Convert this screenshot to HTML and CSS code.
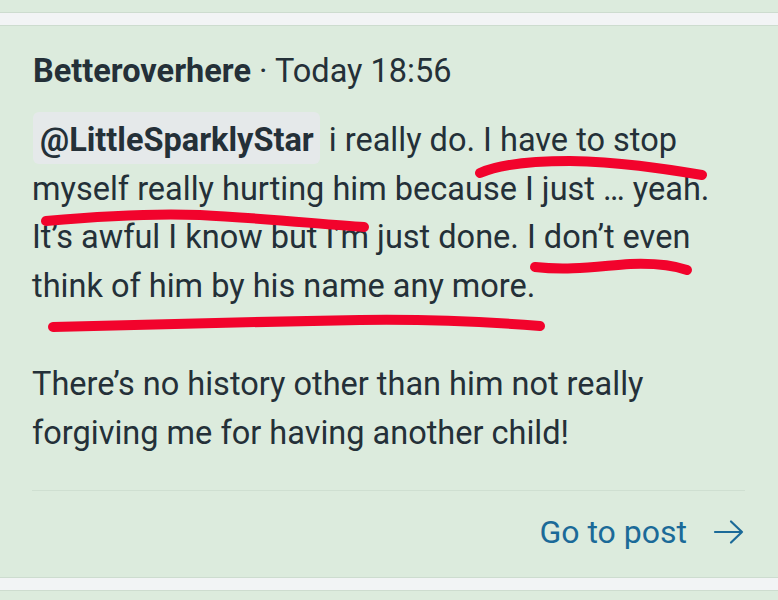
FILE: index.html
```html
<!DOCTYPE html>
<html lang="en">
<head>
<meta charset="utf-8">
<title>Post</title>
<link rel="stylesheet" href="styles.css">
</head>
<body>
<div class="page">
  <div class="spacer"></div>
  <div class="band"></div>
  <article class="card">
    <header class="meta"><span class="author">Betteroverhere</span> · Today 18:56</header>
    <div class="body">
      <p class="para"><span class="mention">@LittleSparklyStar</span> i really do. I have to stop myself really hurting him because I just … yeah. It’s awful I know but I’m just done. I don’t even think of him by his name any more.</p>
      <p class="para">There’s no history other than him not really forgiving me for having another child!</p>
    </div>
    <footer class="foot">
      <a class="go" href="#">Go to post
        <svg class="arrow" width="32" height="26" viewBox="0 0 32 26"><path d="M2 13H29M18 2.5L29 13L18 23.5" fill="none" stroke="currentColor" stroke-width="2.2" stroke-linecap="round" stroke-linejoin="round"/></svg>
      </a>
    </footer>
  </article>
  <div class="band"></div>
  <svg class="ink" viewBox="0 0 778 600" width="778" height="600">
    <g fill="none" stroke="#f2032c" stroke-width="10" stroke-linecap="round" stroke-linejoin="round">
      <path d="M480 173C500 164 530 161 570 161C620 162 660 168 702 175"/>
      <path d="M46 221C90 217 150 213 200 215C260 218 320 224 364 227"/>
      <path d="M535 267C570 271 600 266 630 264C655 263 672 265 687 270"/>
      <path d="M53 327C150 324 260 322 360 320C430 319 490 322 540 326"/>
    </g>
  </svg>
</div>
</body>
</html>
```

FILE: styles.css
```css
html, body {
  margin: 0;
  padding: 0;
}
body {
  background: #dcebdd;
  font-family: Roboto, "Liberation Sans", sans-serif;
  color: #243038;
  overflow: hidden;
}
.page {
  position: relative;
  width: 778px;
  height: 600px;
}
.spacer {
  height: 12px;
}
.band {
  height: 12px;
  background: #f2f4f5;
  border-top: 1px solid #cddccf;
  border-bottom: 1px solid #cddccf;
}
.card {
  padding: 25px 33px 25px 32px;
}
.meta {
  font-size: 32.5px;
  line-height: 40px;
  margin-left: 1px;
}
.author {
  font-weight: 700;
}
.body {
  margin-top: 25px;
  padding-bottom: 33px;
  border-bottom: 1px solid #cfdfd1;
}
.para {
  margin: 0;
  font-size: 32.5px;
  line-height: 48.5px;
}
.para + .para {
  margin-top: 50px;
}
.mention {
  font-weight: 700;
  background: #e5e9ea;
  border-radius: 6px;
  padding: 9px 6px 5px 7px;
  margin-left: 1px;
  margin-right: 1px;
}
.foot {
  display: flex;
  justify-content: flex-end;
  margin-top: 21px;
}
.go {
  display: flex;
  align-items: center;
  gap: 26px;
  color: #1b6a98;
  text-decoration: none;
  font-size: 32px;
  line-height: 40px;
}
.arrow {
  display: block;
}
.ink {
  position: absolute;
  left: 0;
  top: 0;
  pointer-events: none;
}
```
